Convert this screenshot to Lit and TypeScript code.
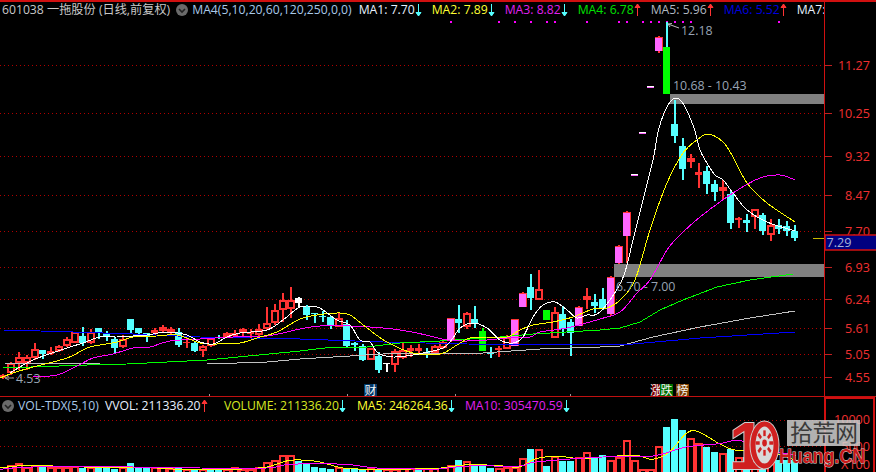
import { LitElement, html, css, svg } from "lit";
import { customElement } from "lit/decorators.js";

type P = [number, number];
// kind: r red hollow, c cyan, m magenta, d dash, g green, G green with cyan wick, w white
type Candle = [number, string, number, number, number, number];

const candles: Candle[] = [
  [3,"r",374,375,378,379],[11,"r",362,363,373,375],[19,"r",352,357,363,370],[27,"r",355,357,363,370],
  [35,"r",343,349,358,360],[43,"c",350,350,354,359],[51,"r",347,351,354,355],[59,"r",345,346,351,352],
  [67,"r",337,339,346,347],[75,"r",332,332,343,343],[83,"c",327,336,343,346],[91,"r",329,332,343,344],
  [99,"c",328,328,332,339],[107,"c",331,333,337,341],[115,"c",337,339,348,353],[123,"r",335,339,347,348],
  [131,"c",319,319,330,334],[139,"c",328,328,333,335],[147,"c",333,333,336,342],[155,"r",328,330,333,335],
  [163,"r",325,327,331,332],[171,"r",327,329,333,335],[179,"c",328,332,345,347],[187,"r",338,342,343,348],
  [195,"c",342,343,351,352],[203,"r",345,346,351,357],[211,"r",337,338,346,347],[219,"c",335,337,338,339],
  [227,"r",332,333,337,338],[235,"r",330,333,336,337],[243,"r",328,329,333,337],[251,"r",329,332,334,338],
  [259,"r",324,329,335,337],[267,"r",307,323,329,330],[275,"r",304,310,323,325],[283,"r",293,300,310,322],
  [291,"r",287,300,309,318],[299,"w",297,298,303,307],[307,"c",305,306,315,320],[315,"c",313,313,314,323],
  [323,"c",311,316,317,322],[331,"c",316,317,326,329],[339,"r",313,318,327,327],[347,"c",320,324,346,347],
  [355,"c",342,343,345,351],[363,"c",344,346,360,361],[371,"r",348,348,360,360],[379,"c",352,356,370,373],
  [387,"w",363,363,364,372],[395,"r",349,351,365,372],[403,"r",342,350,358,359],[411,"r",345,348,351,357],
  [419,"r",344,348,351,353],[427,"c",348,352,355,358],[435,"r",345,346,353,353],[443,"r",339,342,348,349],
  [451,"m",318,318,341,342],[459,"c",305,319,323,333],[467,"r",312,313,327,329],[475,"c",306,319,323,328],
  [483,"g",328,331,351,351],[491,"c",347,352,354,358],[499,"r",346,348,350,357],[507,"r",335,337,349,349],
  [515,"m",319,319,346,346],[523,"m",292,293,307,307],[531,"c",274,287,298,310],[539,"r",270,289,300,300],
  [547,"g",310,310,320,320],[555,"r",307,312,338,338],[563,"c",306,314,329,336],[571,"c",319,322,333,356],
  [579,"m",306,307,326,326],[587,"r",288,296,300,309],[595,"c",294,302,306,313],[603,"c",288,299,308,310],
  [611,"m",276,277,314,316],[619,"m",245,246,263,264],[627,"m",211,212,236,263],
  [635,"d",174,174,176,176],[643,"d",132,132,134,134],[651,"d",86,86,88,88],
  [659,"m",36,37,51,53],[667,"G",22,47,94,94],[675,"c",100,124,136,143],[683,"c",138,146,169,180],
  [691,"r",154,158,162,168],[699,"r",163,172,175,188],[707,"c",166,171,184,194],[715,"c",180,184,192,201],
  [723,"r",180,187,191,200],[731,"c",190,194,223,229],[739,"r",217,218,220,228],[747,"c",214,220,223,232],
  [755,"r",209,209,217,229],[763,"c",213,215,231,235],[771,"r",219,225,235,241],[779,"c",219,225,229,234],
  [787,"c",221,226,231,236],[795,"c",225,231,238,241],
];

const white: P[] = [[10,373],[33,360],[67,348],[83,343],[100,337],[117,337],[133,336],[147,335],[167,332],[187,335],[200,342],[213,344],[227,337],[240,333],[267,330],[283,320],[300,307],[317,307],[323,310],[337,320],[350,325],[360,340],[370,342],[378,353],[393,357],[413,355],[423,353],[443,348],[453,338],[460,328],[473,323],[487,328],[500,340],[513,343],[523,337],[533,317],[543,305],[555,302],[567,310],[577,318],[587,315],[600,312],[622,280],[633,240],[643,200],[653,160],[659,128],[668,105],[676,98],[684,105],[694,128],[700,150],[707,163],[715,175],[723,180],[733,193],[747,210],[767,222],[795,231]];
const yellow: P[] = [[0,378],[13,373],[33,367],[67,358],[87,348],[100,345],[117,342],[133,337],[157,336],[177,335],[200,343],[213,344],[240,343],[260,337],[277,332],[300,319],[317,315],[337,313],[350,315],[367,328],[387,342],[413,353],[440,354],[457,345],[470,338],[487,338],[507,337],[520,330],[533,325],[553,322],[573,317],[593,309],[607,308],[620,300],[635,280],[650,230],[667,183],[683,153],[697,140],[708,134],[723,142],[733,157],[747,183],[767,203],[795,222]];
const magenta: P[] = [[33,377],[57,375],[77,366],[93,358],[113,354],[133,348],[150,347],[170,341],[200,339],[233,337],[267,336],[300,329],[320,326],[350,326],[370,327],[393,329],[417,333],[447,340],[467,341],[487,340],[507,338],[530,337],[540,332],[567,328],[600,319],[620,312],[637,293],[650,280],[667,250],[680,235],[700,217],[733,193],[760,178],[780,175],[795,180]];
const green: P[] = [[3,368],[87,365],[127,364],[207,360],[300,351],[333,347],[367,347],[400,343],[440,341],[500,337],[533,334],[600,330],[620,328],[640,322],[660,310],[683,300],[717,287],[750,280],[793,274]];
const silver: P[] = [[3,363],[100,364],[207,364],[267,362],[300,359],[333,357],[400,353],[483,353],[540,349],[600,347],[620,346],[653,337],[700,327],[750,318],[795,311]];
const blue: P[] = [[3,330],[40,331],[73,332],[133,334],[200,337],[300,339],[383,342],[467,344],[600,345],[633,344],[700,338],[795,332]];

const z6 = (p: P[]) => p.map(([x, z]): P => [x / 3, 392 + z / 3]);
const z7 = (p: P[]) => p.map(([x, z]): P => [436 + x / 3, 392 + z / 3]);
const volYellow: P[] = [
  ...z6([[0,228],[50,222],[100,220],[250,225],[470,228],[540,232],[700,232],[800,225],[870,205],[950,208],[1030,228],[1130,232],[1300,230]]),
  ...z7([[0,230],[100,218],[200,222],[250,225],[300,200],[370,193],[430,200],[500,195],[600,190],[650,202],[700,180],[750,125],[785,118],[850,155],[900,175],[1000,180],[1080,205]]),
];
const volMagenta: P[] = [
  ...z6([[0,232],[100,225],[400,225],[600,228],[800,228],[860,218],[950,215],[1050,218],[1130,228],[1300,232]]),
  ...z7([[0,232],[100,222],[250,222],[300,210],[500,195],[650,192],[750,165],[850,155],[900,145],[950,155],[1000,175],[1080,190]]),
];

const volTopsLeft: [string, number][] = [["r",218],["r",212],["r",225],["r",218],["c",225],["r",225],["r",225],["r",224],["r",222],["c",227],["r",226],["c",225],["c",227],["c",231],["r",224],["c",213],["c",227],["c",227],["r",224],["r",224],["r",228],["c",228],["r",232],["c",231],["r",232],["c",232],["c",234],["r",230],["r",226],["r",230],["r",232],["r",224],["r",210],["r",205],["r",190],["r",190],["c",207],["c",217],["c",225],["c",227],["c",232],["r",224],["c",228],["c",230],["c",230],["r",228],["c",230],["r",230],["r",232],["r",228],["r",228],["c",230],["r",228],["r",228]];
const volTopsRight: [string, number][] = [["r",218],["c",205],["r",207],["c",215],["c",215],["c",228],["r",228],["r",225],["r",225],["r",198],["c",172],["r",170],["c",222],["r",192],["c",208],["c",208],["r",195],["r",180],["c",198],["c",190],["r",205],["r",195],["r",143],["r",205],["r",232],["r",230],["r",162],["c",105],["c",82],["c",115],["r",137],["r",152],["c",165],["c",180],["r",183],["c",170],["r",195],["c",195],["r",175],["c",185],["r",190],["c",205],["c",205],["c",205]];
const volBars: [number, string, number][] = [
  ...volTopsLeft.map(([k, z], i): [number, string, number] => [11 + i * 8, k, Math.round(392 + z / 3)]),
  ...volTopsRight.map(([k, z], i): [number, string, number] => [451 + i * 8, k, Math.round(392 + z / 3)]),
];

const priceTicks: [string, number][] = [["11.27",65.5],["10.25",113.5],["9.32",156.5],["8.47",195.5],["7.70",231.5],["6.93",267.5],["6.24",299.5],["5.61",328.5],["5.05",354.5],["4.55",377.5]];
const signalDots = [451,499,515,531,547,555,587,619,627,643,651,659,667,675,683,691,779];
const dateTicks = [209,347,455,570];

const RED = "#ff3333", CYAN = "#55ffff", MAG = "#ff66ff", GREEN = "#00ff00";

function smooth(p: P[]): string {
  let d = `M${p[0][0]} ${p[0][1]}`;
  for (let i = 0; i < p.length - 1; i++) {
    const a = p[Math.max(0, i - 1)], b = p[i], c = p[i + 1], e = p[Math.min(p.length - 1, i + 2)];
    const c1x = b[0] + (c[0] - a[0]) / 6, c1y = b[1] + (c[1] - a[1]) / 6;
    const c2x = c[0] - (e[0] - b[0]) / 6, c2y = c[1] - (e[1] - b[1]) / 6;
    d += `C${c1x.toFixed(1)} ${c1y.toFixed(1)} ${c2x.toFixed(1)} ${c2y.toFixed(1)} ${c[0]} ${c[1]}`;
  }
  return d;
}

function candle([x, k, hi, top, bot, lo]: Candle) {
  const h = bot - top;
  if (k === "d") {
    return svg`<rect x=${x - 4} y=${top} width="7" height="1" fill="#fff"></rect><rect x=${x - 4} y=${top + 1} width="7" height="1" fill=${MAG}></rect>`;
  }
  const col = k === "r" ? RED : k === "c" ? CYAN : k === "g" || k === "G" ? GREEN : k === "w" ? "#fff" : RED;
  const wickCol = k === "G" ? CYAN : col;
  const wick = svg`<rect x=${x - 1} y=${hi} width="2" height=${lo - hi} fill=${wickCol}></rect>`;
  if (k === "r" && h >= 4) {
    return svg`${wick}<rect x=${x - 3} y=${top + 1} width="6" height=${h - 2} fill="#000" stroke=${col} stroke-width="2"></rect>`;
  }
  if (k === "m") {
    return svg`${wick}<rect x=${x - 4} y=${top} width="8" height=${h} fill=${RED}></rect><rect x=${x - 4} y=${top + 1} width="7" height=${Math.max(1, h - 1)} fill=${MAG}></rect>`;
  }
  return svg`${wick}<rect x=${x - 4} y=${top} width="7" height=${Math.max(h, 1)} fill=${col}></rect>`;
}

function chevronIcon() {
  return html`<svg class="chev" width="12" height="12" viewBox="0 0 12 12"><circle cx="6" cy="6" r="6" fill="#6a6a6a"></circle><path d="M3 5l3 3 3-3" fill="none" stroke="#222" stroke-width="1.6"></path></svg>`;
}
function arrow(up: boolean) {
  const c = up ? RED : CYAN;
  return html`<svg class="arr" width="7" height="14" viewBox="0 0 7 14"><path d=${up ? "M3.5 1V13M1 4.5L3.5 1 6 4.5z" : "M3.5 1V13M1 9.5L3.5 13 6 9.5z"} stroke=${c} fill=${c}></path></svg>`;
}

@customElement("app-root")
export class AppRoot extends LitElement {
  static styles = css`
    :host { display: block; position: relative; width: 876px; height: 472px; background: #000; overflow: hidden;
      font-family: "Open Sans", "Noto Sans CJK SC", sans-serif; font-size: 12.2px; }
    .root { display: grid; grid-template-rows: 397px 75px; width: 876px; height: 472px; }
    .panel { display: flex; }
    .main { border-top: 2px solid #d01010; box-sizing: border-box; border-bottom: 1px solid #c01010; }
    .plot { position: relative; width: 824px; flex: none; overflow: hidden; }
    .canvas { position: absolute; left: 0; display: block; }
    .main .canvas { top: -2px; }
    .sub .canvas { top: 0; }
    .legend { position: relative; display: flex; align-items: center; height: 15px; white-space: nowrap; }
    .main .legend { padding-left: 2px; }
    .sub .legend { padding-left: 2px; height: 17px; }
    .legend span { line-height: 15px; }
    .chev { flex: none; }
    .arr { flex: none; margin-left: 0.5px; }
    .title { color: #c8c8c8; margin-right: 6px; }
    .param { color: #a8c8e8; margin-left: 4px; margin-right: 7px; }
    .sub .param { margin-right: 6px; }
    .w { color: #e8f0ff; }
    .y { color: #ffff33; }
    .vy { color: #d8e820; }
    .m { color: #e020f0; }
    .g { color: #00e000; }
    .s { color: #b0b8c0; }
    .b { color: #0000e0; }
    .ma { flex: none; width: 73px; display: flex; align-items: center; }
    .vvol { width: 119px; }
    .volume { width: 133px; }
    .ma5 { width: 108px; }
    .ma10 { width: 120px; }
    .axis { width: 52px; flex: none; display: block; }
    text { font-family: "Open Sans", "Noto Sans CJK SC", sans-serif; }
    .lbl { font-size: 12.4px; fill: #98a4b4; }
    .now { font-size: 12.6px; fill: #a8b4d8; }
    .tick { font-size: 12.6px; fill: #f03030; text-anchor: end; }
    .badge { font-size: 12px; fill: #f4f4f4; }
    .wm { position: absolute; left: 0; top: 0; pointer-events: none; }
    .wm-cn { font-size: 23px; fill: #3a3a3a; font-family: "Noto Sans CJK SC", sans-serif; }
    .wm-en { font-family: "Liberation Sans", sans-serif; font-weight: 700; font-size: 21px; fill: #c81818;
      stroke: #d8d8d8; stroke-width: 1px; paint-order: stroke; }
    .wm-one { font-family: "Liberation Sans", sans-serif; font-weight: 700; font-size: 66px; fill: #d02020;
      stroke: #d0d0d0; stroke-width: 2px; paint-order: stroke; }
    .aa { shape-rendering: crispEdges; }
  `;

  private mainCanvas() {
    return svg`
      <g class="aa">
        ${priceTicks.map(([, y]) => svg`<line x1="0" x2="824" y1=${y} y2=${y} stroke="#b00000" stroke-dasharray="1 3"></line>`)}
        <rect x="670" y="94" width="154" height="10" fill="#808080"></rect>
        <rect x="614" y="264" width="210" height="13" fill="#808080"></rect>
        ${signalDots.map((x) => svg`<rect x=${x - 1} y="21" width="2" height="2" fill="#ff00ff"></rect>`)}
        ${candles.map(candle)}
        ${[[silver, "#c0c0c0"], [blue, "#0000ff"], [green, GREEN]].map(([p, c]) => svg`<polyline points=${(p as P[]).join(" ")} fill="none" stroke=${c as string}></polyline>`)}
        <path d=${smooth(magenta)} fill="none" stroke="#ff00ff"></path>
        <path d=${smooth(yellow)} fill="none" stroke="#ffff00"></path>
        <path d=${smooth(white)} fill="none" stroke="#ffffff"></path>
        <rect x="813" y="238" width="11" height="1" fill="#c8b800"></rect>
        ${dateTicks.map((x) => svg`<rect x=${x} y="394" width="1" height="3" fill="#999"></rect>`)}
      </g>
      <path d="M14 378H5M5 378l4-2M5 378l4 2" stroke="#999" fill="none"></path>
      <text class="lbl" x="16" y="383">4.53</text>
      <path d="M679 28L668 24M668 24l4-0.5M668 24l2 3" stroke="#bbb" fill="none"></path>
      <text class="lbl" x="681" y="35">12.18</text>
      <text class="lbl" x="673" y="90">10.68 - 10.43</text>
      <text class="lbl" x="616" y="291">6.70 - 7.00</text>
      <rect x="364" y="384" width="13" height="12" fill="#003868"></rect>
      <text class="badge" x="364.5" y="394.5">财</text>
      <rect x="652" y="384" width="8" height="12" fill="#800000"></rect>
      <text class="badge" x="650" y="394.5">涨</text>
      <rect x="660" y="384" width="13" height="12" fill="#007000"></rect>
      <text class="badge" x="660.5" y="394.5">跌</text>
      <rect x="676" y="384" width="13" height="12" fill="#804000"></rect>
      <text class="badge" x="676.5" y="394.5">榜</text>
    `;
  }

  private subCanvas() {
    return svg`
      <g class="aa">
        ${[420.5, 446.5].map((y) => svg`<line x1="0" x2="824" y1=${y} y2=${y} stroke="#b00000" stroke-dasharray="1 3"></line>`)}
        ${volBars.map(([x, k, top]) => k === "r"
          ? svg`<rect x=${x - 3} y=${top + 1} width="6" height=${473 - top} fill="#000" stroke=${RED} stroke-width="2"></rect>`
          : svg`<rect x=${x - 4} y=${top} width="7" height=${472 - top} fill=${CYAN}></rect>`)}
        <path d=${smooth(volYellow)} fill="none" stroke="#ffff00"></path>
        <path d=${smooth(volMagenta)} fill="none" stroke="#ff00ff"></path>
      </g>
    `;
  }

  private watermark() {
    const teeth = Array.from({ length: 8 }, (_, i) => i * 45);
    return svg`
      <rect x="787" y="420" width="73" height="26" fill="#d0d0d0" fill-opacity="0.85"></rect>
      <text class="wm-cn" x="790" y="441" textLength="68">拾荒网</text>
      <text class="wm-one" x="729" y="469">1</text>
      <ellipse cx="764.5" cy="445" rx="15" ry="24.5" fill="#d0d0d0"></ellipse>
      <ellipse cx="764.5" cy="445" rx="11.5" ry="21" fill="#d8d8d8" stroke="#d02020" stroke-width="5"></ellipse>
      <g transform="translate(764.5 443) scale(0.8 1.15)">
        ${teeth.map((a) => svg`<rect x="-1.5" y="-11" width="3" height="5" fill="#d02020" transform="rotate(${a})"></rect>`)}
        <circle r="3" fill="#d02020"></circle>
      </g>
      <text class="wm-en" x="779" y="463" textLength="86" lengthAdjust="spacingAndGlyphs">Huang.CN</text>
    `;
  }

  render() {
    return html`
      <div class="root">
        <div class="panel main">
          <div class="plot">
            <svg class="canvas" width="824" height="397" viewBox="0 0 824 397">${this.mainCanvas()}</svg>
            <div class="legend">
              <span class="title">601038 一拖股份 (日线,前复权)</span>
              ${chevronIcon()}
              <span class="param">MA4(5,10,20,60,120,250,0,0)</span>
              <span class="ma w"><span>MA1: 7.70</span>${arrow(false)}</span>
              <span class="ma y"><span>MA2: 7.89</span>${arrow(false)}</span>
              <span class="ma m"><span>MA3: 8.82</span>${arrow(false)}</span>
              <span class="ma g"><span>MA4: 6.78</span>${arrow(true)}</span>
              <span class="ma s"><span>MA5: 5.96</span>${arrow(true)}</span>
              <span class="ma b"><span>MA6: 5.52</span>${arrow(true)}</span>
              <span class="ma w"><span>MA7: 5.12</span></span>
            </div>
          </div>
          <svg class="axis" width="52" height="394" viewBox="824 2 52 394">
            <rect x="824" y="2" width="1" height="395" fill="#d01010"></rect>
            ${priceTicks.map(([t, y]) => svg`<line x1="824" x2="832" y1=${y} y2=${y} stroke="#c02020"></line><text class="tick" x="870" y=${y + 4.5}>${t}</text>`)}
            <rect x="825" y="235" width="52" height="15" fill="#000080" stroke="#d01010" stroke-width="1.5"></rect>
            <text class="now" x="826.5" y="247">7.29</text>
          </svg>
        </div>
        <div class="panel sub">
          <div class="plot">
            <svg class="canvas" width="824" height="75" viewBox="0 397 824 75">${this.subCanvas()}</svg>
            <div class="legend">
              ${chevronIcon()}
              <span class="param">VOL-TDX(5,10)</span>
              <span class="ma w vvol"><span>VVOL: 211336.20</span>${arrow(true)}</span>
              <span class="ma vy volume"><span>VOLUME: 211336.20</span>${arrow(false)}</span>
              <span class="ma y ma5"><span>MA5: 246264.36</span>${arrow(false)}</span>
              <span class="ma m ma10"><span>MA10: 305470.59</span>${arrow(false)}</span>
            </div>
          </div>
          <svg class="axis" width="52" height="75" viewBox="824 397 52 75">
            <rect x="825" y="398" width="49" height="76" fill="none" stroke="#d01010" stroke-width="2"></rect>
            <text class="tick" x="870" y="424">10000</text>
            <text class="tick" x="870" y="451">5000</text>
            <text class="tick" x="870" y="469">X100</text>
          </svg>
        </div>
      </div>
      <svg class="wm" width="876" height="472" viewBox="0 0 876 472">${this.watermark()}</svg>
    `;
  }
}
